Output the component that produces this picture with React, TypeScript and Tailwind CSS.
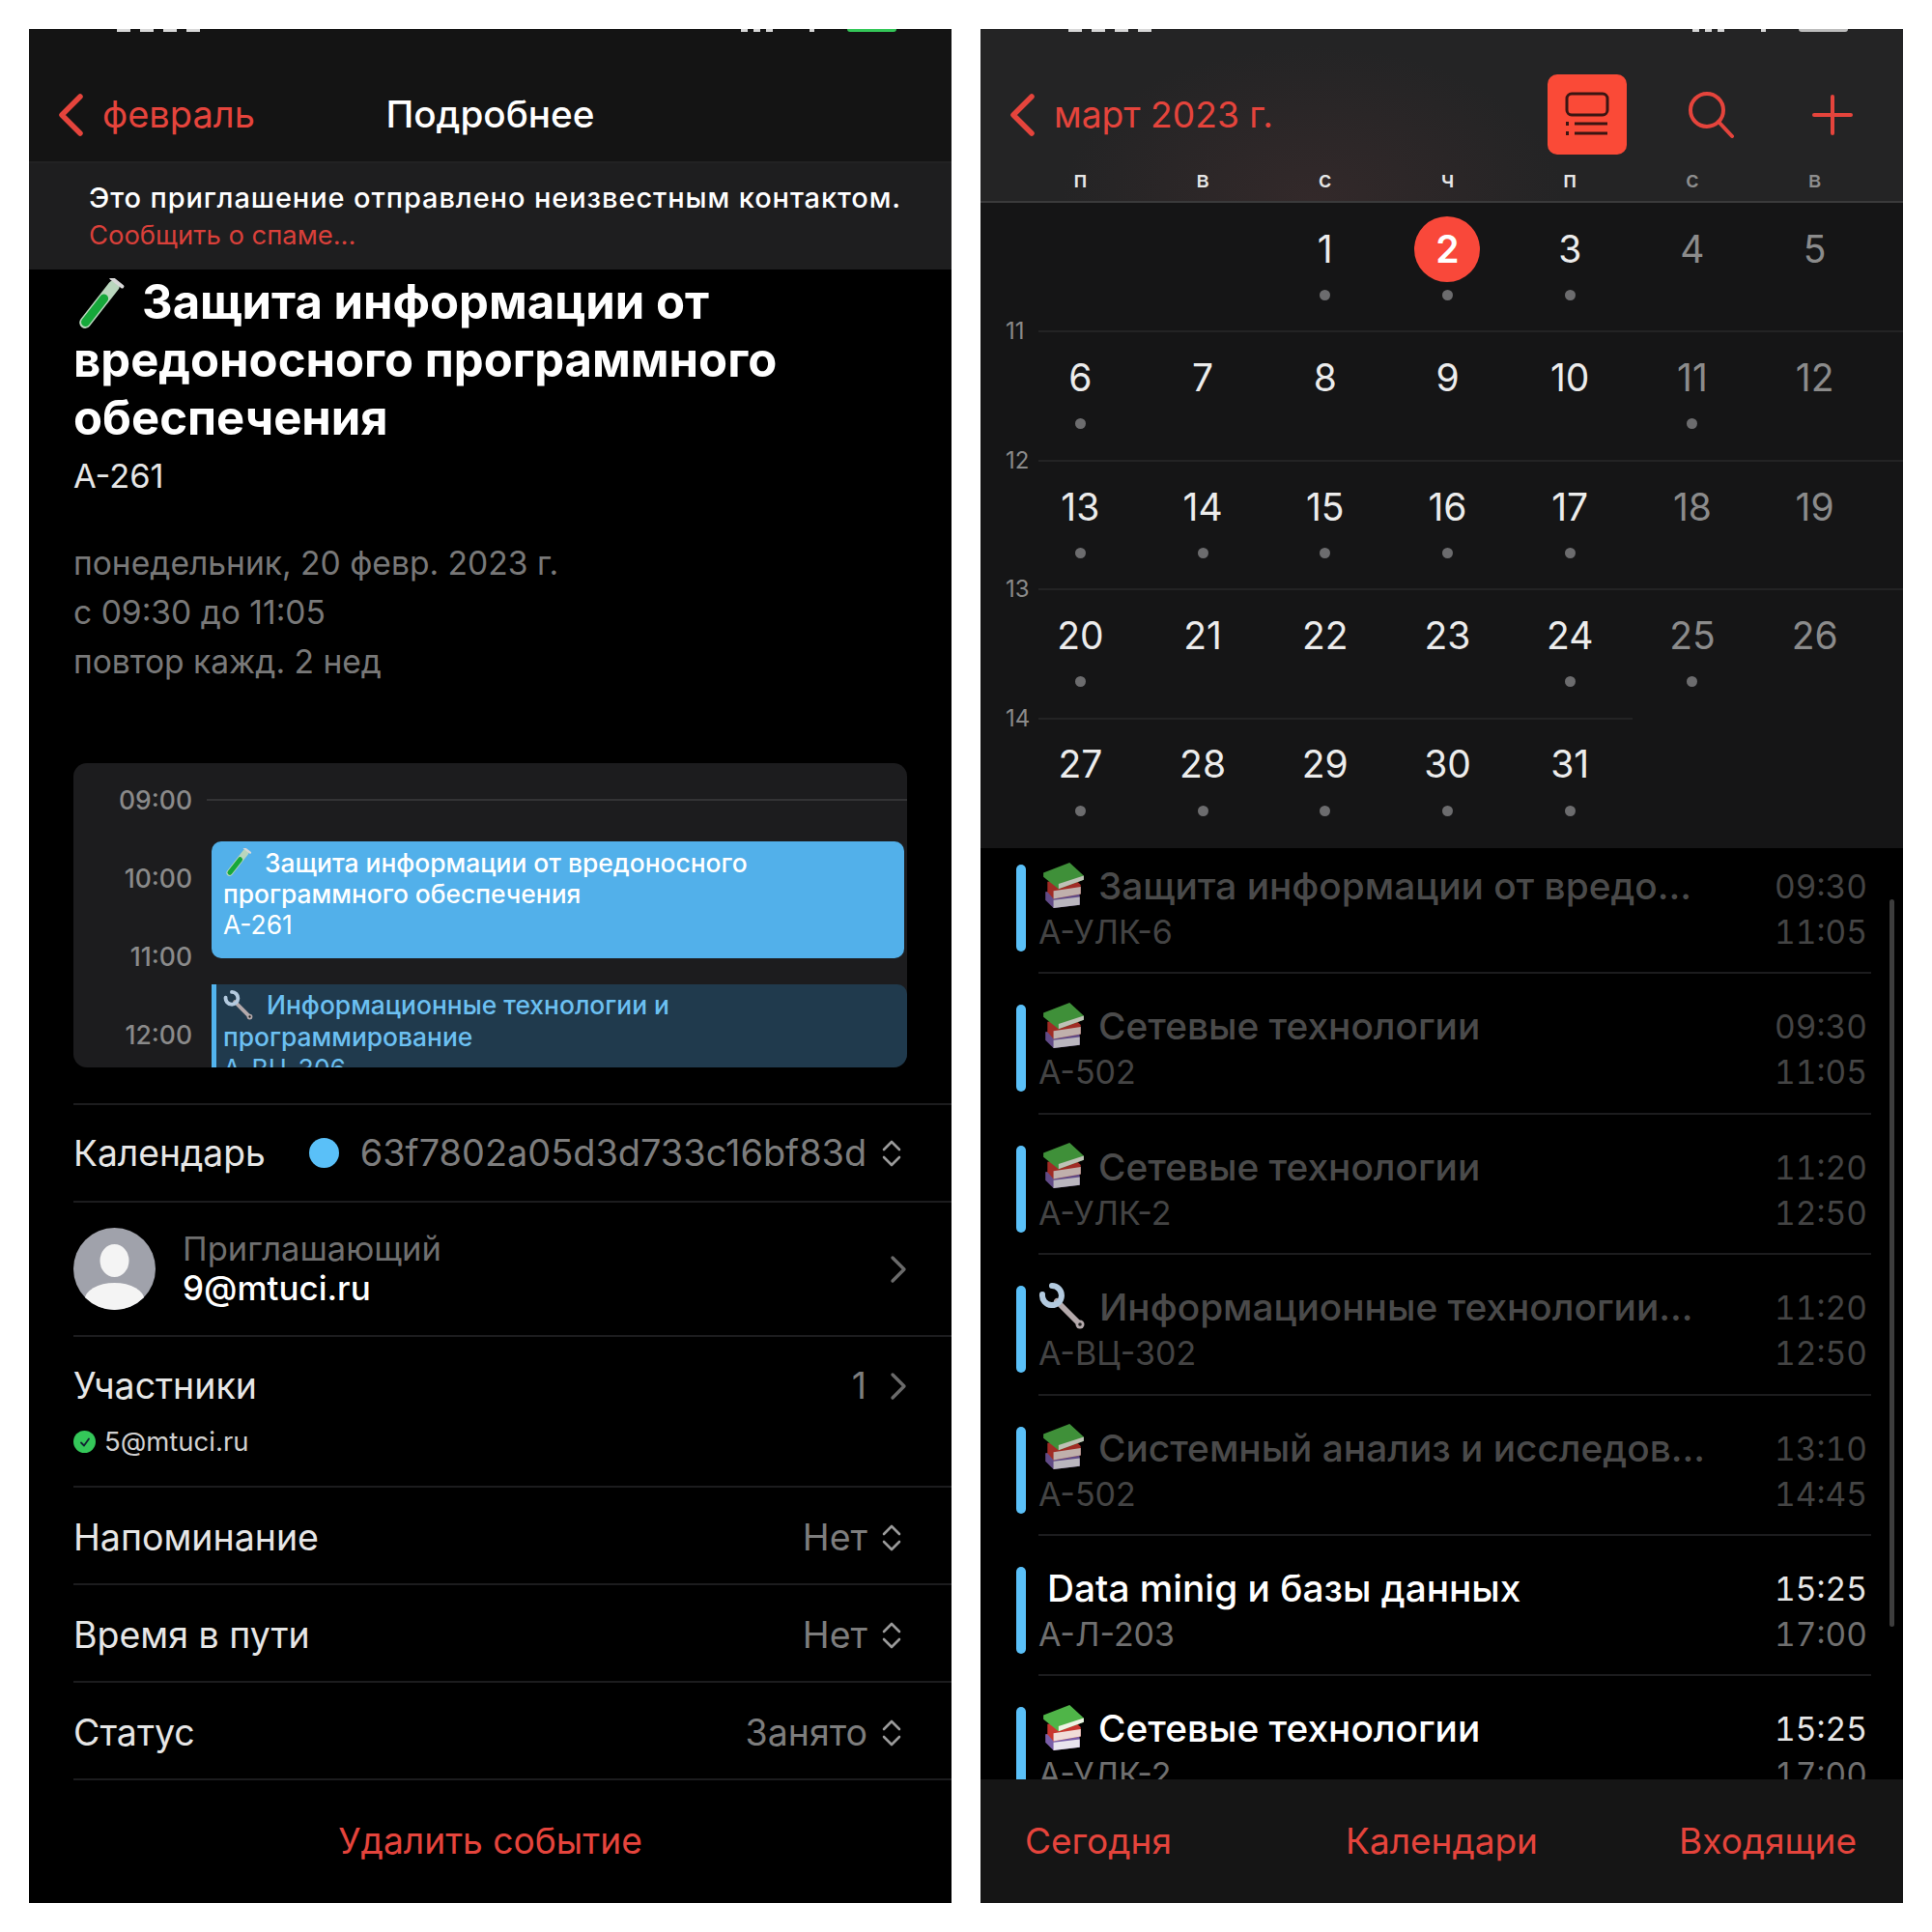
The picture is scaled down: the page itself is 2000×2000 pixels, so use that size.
import React from 'react';

const sans = "[font-family:Inter,'Noto_Sans',sans-serif]";

function BackChevron({ className }: { className?: string }) {
  return (
    <svg viewBox="0 0 26 44" className={`w-[26px] h-[44px] ${className ?? ''}`} fill="none">
      <path d="M23 3 L4 22 L23 41" stroke="#e5443c" strokeWidth="5.5" strokeLinecap="round" strokeLinejoin="round" />
    </svg>
  );
}

function UpDown() {
  return (
    <svg viewBox="0 0 24 32" className="w-[24px] h-[32px] shrink-0" fill="none">
      <path d="M4 12 L12 4 L20 12 M4 20 L12 28 L20 20" stroke="#9a9a9a" strokeWidth="2.6" strokeLinecap="round" strokeLinejoin="round" />
    </svg>
  );
}

function RightChevron() {
  return (
    <svg viewBox="0 0 18 30" className="w-[18px] h-[30px] shrink-0" fill="none">
      <path d="M3 3 L15 15 L3 27" stroke="#6a6a6a" strokeWidth="3.4" strokeLinecap="round" strokeLinejoin="round" />
    </svg>
  );
}

function TestTube({ size = 54 }: { size?: number }) {
  return (
    <svg viewBox="0 0 54 54" width={size} height={size} className="shrink-0">
      <g transform="rotate(38 27 27)">
        <rect x="21" y="-3" width="12" height="60" rx="6" fill="#b9d6bd" />
        <rect x="22.5" y="15" width="9" height="40" rx="4.5" fill="#16a83a" />
        <rect x="18" y="-4" width="18" height="4" rx="2" fill="#d8d8d8" />
      </g>
    </svg>
  );
}

function Books({ size = 48, dim = false }: { size?: number; dim?: boolean }) {
  return (
    <svg viewBox="0 0 44 46" width={size} height={size} className={`shrink-0 ${dim ? 'opacity-80' : ''}`}>
      <path d="M4 30 L30 27 L38 33 L38 43 L12 46 L4 38 Z" fill="#7a5ea8" />
      <path d="M12 38 L38 35 L38 43 L12 46 Z" fill="#e9e4ee" />
      <path d="M6 20 L32 16 L39 23 L39 32 L12 37 L6 30 Z" fill="#c8372f" />
      <path d="M12 29 L39 25 L39 32 L12 37 Z" fill="#f0dcd8" />
      <path d="M2 11 L28 1 L42 14 L42 18 L17 27 L2 15 Z" fill="#4fb548" />
      <path d="M17 22 L42 14 L42 18 L17 27 Z" fill="#eef2e4" />
    </svg>
  );
}

function Wrench({ size = 50 }: { size?: number }) {
  return (
    <svg viewBox="0 0 50 50" width={size} height={size} className="shrink-0" fill="none">
      <path d="M19 19 L42 42" stroke="#b4a9ab" strokeWidth="6" strokeLinecap="round" />
      <path d="M4 12 A10 10 0 1 0 14 3" stroke="#b3cadf" strokeWidth="6" strokeLinecap="round" />
      <circle cx="43" cy="43" r="4.5" fill="#b4a9ab" />
      <circle cx="43" cy="43" r="1.8" fill="#222" />
    </svg>
  );
}

function SliverBar({ battery }: { battery: string }) {
  return (
    <div className="absolute top-0 left-0 right-0 h-[3px] flex justify-between pl-[91px] pr-[57px]">
      <div className="flex gap-[10px]">
        <div className="w-[14px] bg-[#d8d8d8]" />
        <div className="w-[14px] bg-[#d8d8d8]" />
        <div className="w-[14px] bg-[#d8d8d8]" />
        <div className="w-[14px] bg-[#d8d8d8]" />
      </div>
      <div className="flex gap-[6px]">
        <div className="w-[7px] bg-[#d8d8d8]" />
        <div className="w-[7px] bg-[#d8d8d8]" />
        <div className="w-[7px] bg-[#d8d8d8] mr-[32px]" />
        <div className="w-[5px] bg-[#d8d8d8] mr-[28px]" />
        <div className="w-[51px] rounded-b-sm" style={{ background: battery }} />
      </div>
    </div>
  );
}

function DetailRow({ label, value }: { label: string; value: string }) {
  return (
    <div className="h-[101px] pt-[5px] border-b-2 border-[#1c1c1e] flex items-center justify-between pr-[50px]">
      <span className="text-[37.5px] text-[#e6e6e6]">{label}</span>
      <span className="flex items-center gap-[13px]">
        <span className="text-[37.5px] text-[#7d7d7d]">{value}</span>
        <UpDown />
      </span>
    </div>
  );
}

function EventDetails() {
  return (
    <div className="w-[955px] h-[1940px] bg-black flex flex-col overflow-hidden shrink-0">
      <div className="relative h-[139px] bg-[#141414] pt-[40px] pl-[30px] grid grid-cols-[1fr_auto_1fr] items-center border-b-2 border-[#222223]">
        <SliverBar battery="#34c759" />
        <div className="flex items-center gap-[20px]">
          <BackChevron />
          <span className="text-[38px] text-[#e5443c]">февраль</span>
        </div>
        <span className="text-[38.7px] font-medium text-white -ml-[30px]">Подробнее</span>
        <span />
      </div>

      <div className="h-[110px] bg-[#1e1e1f] pl-[62px] pt-[17px] flex flex-col">
        <span className="text-[29px] leading-[38px] tracking-[0.9px] font-medium text-white whitespace-nowrap">Это приглашение отправлено неизвестным контактом.</span>
        <span className="text-[27.4px] leading-[38px] text-[#d9403a]">Сообщить о спаме...</span>
      </div>

      <div className="pl-[46px] pt-[4px]">
        <h1 className="text-[49px] leading-[60px] font-bold text-white">
          <span className="inline-block align-[-12px] mr-[17px]"><TestTube /></span>
          Защита информации от
          <br />
          вредоносного программного
          <br />
          обеспечения
        </h1>
        <p className="mt-[4px] text-[34.4px] leading-[51px] text-[#e6e6e6]">А-261</p>
        <div className="mt-[39px] text-[33.6px] leading-[51px] text-[#787878]">
          <p>понедельник, 20 февр. 2023 г.</p>
          <p>с 09:30 до 11:05</p>
          <p>повтор кажд. 2 нед</p>
        </div>
      </div>

      <div className="mx-[46px] mt-[80px] h-[315px] rounded-[14px] bg-[#1c1c1e] overflow-hidden flex shrink-0">
        <div className="w-[123px] pt-[18px] flex flex-col items-end text-[26.5px] font-medium text-[#8a8a8a] leading-[40px] gap-[41px] shrink-0">
          {['09:00', '10:00', '11:00', '12:00'].map((t) => (
            <span key={t}>{t}</span>
          ))}
        </div>
        <div className="flex-1 pl-[20px] pt-[37px] min-w-0">
          <div className="h-[2px] -ml-[5px] bg-[#333335]" />
          <div className="mt-[42px] h-[121px] mr-[3px] rounded-[10px] bg-[#52b0ea] pl-[12px] pt-[6px] text-[26.4px] leading-[32px] font-medium text-white">
            <div className="flex items-center gap-[13px] h-[32px]">
              <TestTube size={30} />
              <span>Защита информации от вредоносного</span>
            </div>
            <div>программного обеспечения</div>
            <div className="font-normal">А-261</div>
          </div>
          <div className="mt-[27px] h-[110px] rounded-r-[10px] bg-[#203a4d] border-l-[5px] border-[#52b4ee] pl-[7px] pt-[5px] text-[26.4px] leading-[33px] font-medium text-[#6cc0f2]">
            <div className="flex items-center gap-[13px] h-[33px]">
              <Wrench size={32} />
              <span>Информационные технологии и</span>
            </div>
            <div>программирование</div>
            <div className="font-normal">А-ВЦ-306</div>
          </div>
        </div>
      </div>

      <div className="ml-[46px] mt-[37px] border-t-2 border-[#1c1c1e] flex flex-col">
        <div className="h-[101px] border-b-2 border-[#1c1c1e] flex items-center pr-[50px]">
          <span className="text-[37.2px] text-[#e6e6e6]">Календарь</span>
          <span className="ml-[45px] w-[31px] h-[31px] rounded-full bg-[#5ac0f8] shrink-0" />
          <span className="ml-[22px] text-[37.9px] text-[#7d7d7d] flex-1 whitespace-nowrap">63f7802a05d3d733c16bf83d</span>
          <UpDown />
        </div>

        <div className="h-[139px] border-b-2 border-[#1c1c1e] flex items-center pr-[46px]">
          <svg viewBox="0 0 85 85" className="w-[85px] h-[85px] shrink-0">
            <defs>
              <clipPath id="avatar-clip"><circle cx="42.5" cy="42.5" r="42.5" /></clipPath>
            </defs>
            <g clipPath="url(#avatar-clip)">
              <rect width="85" height="85" fill="#a0a2ab" />
              <ellipse cx="42.5" cy="34" rx="15" ry="17" fill="#f4f4f4" />
              <ellipse cx="42.5" cy="75" rx="31" ry="18" fill="#f4f4f4" />
            </g>
          </svg>
          <div className="ml-[28px] flex-1 flex flex-col -mt-[1px]">
            <span className="text-[34.5px] leading-[41px] text-[#6f6f6f]">Приглашающий</span>
            <span className="text-[35px] leading-[41px] font-medium text-white">9@mtuci.ru</span>
          </div>
          <RightChevron />
        </div>

        <div className="h-[156px] border-b-2 border-[#1c1c1e] flex flex-col pr-[46px] pt-[27px]">
          <div className="flex items-center justify-between h-[48px]">
            <span className="text-[37.5px] text-[#e6e6e6]">Участники</span>
            <span className="flex items-center gap-[24px]">
              <span className="text-[37.5px] text-[#7d7d7d]">1</span>
              <RightChevron />
            </span>
          </div>
          <div className="mt-[13px] flex items-center gap-[9px]">
            <span className="w-[23px] h-[23px] rounded-full bg-[#34c759] flex items-center justify-center shrink-0">
              <svg viewBox="0 0 14 14" className="w-[14px] h-[14px]" fill="none">
                <path d="M3 7.5 L6 10.5 L11 3.5" stroke="#123" strokeWidth="1.8" strokeLinecap="round" strokeLinejoin="round" />
              </svg>
            </span>
            <span className="text-[27.5px] text-[#d0d0d0]">5@mtuci.ru</span>
          </div>
        </div>

        <DetailRow label="Напоминание" value="Нет" />
        <DetailRow label="Время в пути" value="Нет" />
        <DetailRow label="Статус" value="Занято" />
      </div>

      <div className="flex-1 flex items-center justify-center pb-[2px]">
        <span className="text-[37.2px] text-[#e5443c]">Удалить событие</span>
      </div>
    </div>
  );
}

type Day = { n: number; dot: boolean; weekend?: boolean };

const weeks: { num?: number; offset?: number; days: Day[] }[] = [
  { offset: 2, days: [
    { n: 1, dot: true }, { n: 2, dot: true }, { n: 3, dot: true },
    { n: 4, dot: false, weekend: true }, { n: 5, dot: false, weekend: true },
  ] },
  { num: 11, days: [
    { n: 6, dot: true }, { n: 7, dot: false }, { n: 8, dot: false }, { n: 9, dot: false }, { n: 10, dot: false },
    { n: 11, dot: true, weekend: true }, { n: 12, dot: false, weekend: true },
  ] },
  { num: 12, days: [
    { n: 13, dot: true }, { n: 14, dot: true }, { n: 15, dot: true }, { n: 16, dot: true }, { n: 17, dot: true },
    { n: 18, dot: false, weekend: true }, { n: 19, dot: false, weekend: true },
  ] },
  { num: 13, days: [
    { n: 20, dot: true }, { n: 21, dot: false }, { n: 22, dot: false }, { n: 23, dot: false }, { n: 24, dot: true },
    { n: 25, dot: true, weekend: true }, { n: 26, dot: false, weekend: true },
  ] },
  { num: 14, days: [
    { n: 27, dot: true }, { n: 28, dot: true }, { n: 29, dot: true }, { n: 30, dot: true }, { n: 31, dot: true },
  ] },
];

const events = [
  { icon: 'books', title: 'Защита информации от вредо...', place: 'А-УЛК-6', from: '09:30', to: '11:05', past: true },
  { icon: 'books', title: 'Сетевые технологии', place: 'А-502', from: '09:30', to: '11:05', past: true },
  { icon: 'books', title: 'Сетевые технологии', place: 'А-УЛК-2', from: '11:20', to: '12:50', past: true },
  { icon: 'wrench', title: 'Информационные технологии...', place: 'А-ВЦ-302', from: '11:20', to: '12:50', past: true },
  { icon: 'books', title: 'Системный анализ и исследов...', place: 'А-502', from: '13:10', to: '14:45', past: true },
  { icon: '', title: 'Data minig и базы данных', place: 'А-Л-203', from: '15:25', to: '17:00', past: false },
  { icon: 'books', title: 'Сетевые технологии', place: 'А-УЛК-2', from: '15:25', to: '17:00', past: false },
];

function CalendarList() {
  return (
    <div className="w-[955px] h-[1940px] bg-black flex flex-col overflow-hidden shrink-0">
      <div className="relative h-[180px] bg-[#242425] border-b-2 border-[#3a3a3b] bg-[radial-gradient(ellipse_260px_160px_at_36%_100%,#33292a,#242425)] flex flex-col">
        <SliverBar battery="#bdbdbd" />
        <div className="h-[138px] pt-[40px] pl-[30px] pr-[52px] flex items-center">
          <BackChevron />
          <span className="ml-[20px] text-[37.2px] text-[#e5443c]">март 2023 г.</span>
          <div className="ml-auto -mt-[2px] w-[82px] h-[83px] rounded-[10px] bg-[#fa4a37] flex items-center justify-center">
            <svg viewBox="0 0 50 46" className="w-[50px] h-[46px]" fill="none" stroke="#3a1512" strokeWidth="3">
              <rect x="4" y="2" width="42" height="22" rx="5" />
              <path d="M12 33 H46 M12 43 H46" />
              <path d="M3 33 H6 M3 43 H6" strokeWidth="4" />
            </svg>
          </div>
          <svg viewBox="0 0 50 50" className="ml-[62px] w-[50px] h-[50px]" fill="none" stroke="#e5443c" strokeWidth="4" strokeLinecap="round">
            <circle cx="21" cy="20" r="17" />
            <path d="M33 32 L47 47" />
          </svg>
          <svg viewBox="0 0 42 42" className="ml-[80px] w-[42px] h-[42px]" fill="none" stroke="#e5443c" strokeWidth="4" strokeLinecap="round">
            <path d="M21 2 V40 M2 21 H40" />
          </svg>
        </div>
        <div className="grid grid-cols-7 pl-[40px] pr-[28px] mt-[3px]">
          {['п', 'в', 'с', 'ч', 'п', 'с', 'в'].map((d, i) => (
            <span key={i} className={`text-center text-[24px] leading-[30px] font-medium ${i > 4 ? 'text-[#8e8e8e]' : 'text-[#e6e6e6]'}`}>{d}</span>
          ))}
        </div>
      </div>

      <div className="h-[668px] bg-[#151516] shrink-0 flex flex-col">
        {weeks.map((w, wi) => (
          <div key={wi} className={`relative h-[133.4px] pl-[40px] pr-[28px] grid grid-cols-7 ${wi > 0 && wi < 4 ? 'before:absolute before:left-[60px] before:right-0 before:-top-[1px] before:h-[2px] before:bg-[#232324]' : ''} ${wi === 4 ? 'before:absolute before:left-[60px] before:w-[615px] before:-top-[1px] before:h-[2px] before:bg-[#232324]' : ''}`}>
            {w.num && <span className="absolute left-[26px] -top-[14px] text-[24px] leading-[28px] text-[#8a8a8a]">{w.num}</span>}
            {w.offset && <span className="col-span-2" />}
            {w.days.map((d) => (
              <div key={d.n} className="flex flex-col items-center pt-[14px]">
                <span className={`w-[68px] h-[68px] rounded-full flex items-center justify-center text-[39px] ${d.n === 2 ? 'bg-[#f9483a] text-white font-semibold' : d.weekend ? 'text-[#8b8b8b]' : 'text-[#ececec]'}`}>{d.n}</span>
                <span className={`mt-[8px] w-[11px] h-[11px] rounded-full ${d.dot ? 'bg-[#6c6c6e]' : ''}`} />
              </div>
            ))}
          </div>
        ))}
      </div>

      <div className="relative flex-1 min-h-0 overflow-hidden">
        <div className="-mt-[15px] pl-[37px]">
          {events.map((e, i) => (
            <div key={i} className="h-[145.4px] pt-[32px] flex">
              <div className="w-[10px] h-[90px] rounded-full bg-[#5ac0f8] shrink-0" />
              <div className="ml-[13px] mr-[33px] flex-1 min-w-0 h-[113.4px] border-b-2 border-[#1c1c1e] flex justify-between">
                <div className="flex flex-col">
                  <div className="h-[44px] flex items-center">
                    {e.icon === 'books' && <span className="mr-[12px] ml-[2px] -mt-[3px]"><Books dim={e.past} /></span>}
                    {e.icon === 'wrench' && <span className="mr-[13px]"><Wrench /></span>}
                    {!e.icon && <span className="w-[9px]" />}
                    <span className={`text-[38.8px] leading-[44px] font-medium whitespace-nowrap ${e.past ? 'text-[#4a4a4a]' : 'text-white'}`}>{e.title}</span>
                  </div>
                  <span className={`mt-[4px] text-[34px] leading-[44px] ${e.past ? 'text-[#444444]' : 'text-[#6f6f6f]'}`}>{e.place}</span>
                </div>
                <div className={`flex flex-col items-end pr-[4px] pt-[1px] text-[33.5px] leading-[44px] tabular-nums ${e.past ? 'text-[#444444]' : ''}`}>
                  <span className={e.past ? '' : 'text-[#e6e6e6]'}>{e.from}</span>
                  <span className={`mt-[3px] ${e.past ? '' : 'text-[#6f6f6f]'}`}>{e.to}</span>
                </div>
              </div>
            </div>
          ))}
        </div>
        <div className="absolute right-[9px] top-[53px] w-[5px] h-[753px] rounded-full bg-[#3d3d3d]" />
      </div>

      <div className="h-[128px] bg-[#151515] shrink-0 flex items-center justify-between pl-[46px] pr-[48px]">
        <span className="text-[37px] text-[#e5443c]">Сегодня</span>
        <span className="ml-[34px] text-[37px] text-[#e5443c]">Календари</span>
        <span className="text-[37px] text-[#e5443c]">Входящие</span>
      </div>
    </div>
  );
}

export default function App() {
  return (
    <div className={`w-[2000px] h-[2000px] bg-white pt-[30px] pl-[30px] flex gap-[30px] ${sans}`}>
      <EventDetails />
      <CalendarList />
    </div>
  );
}
